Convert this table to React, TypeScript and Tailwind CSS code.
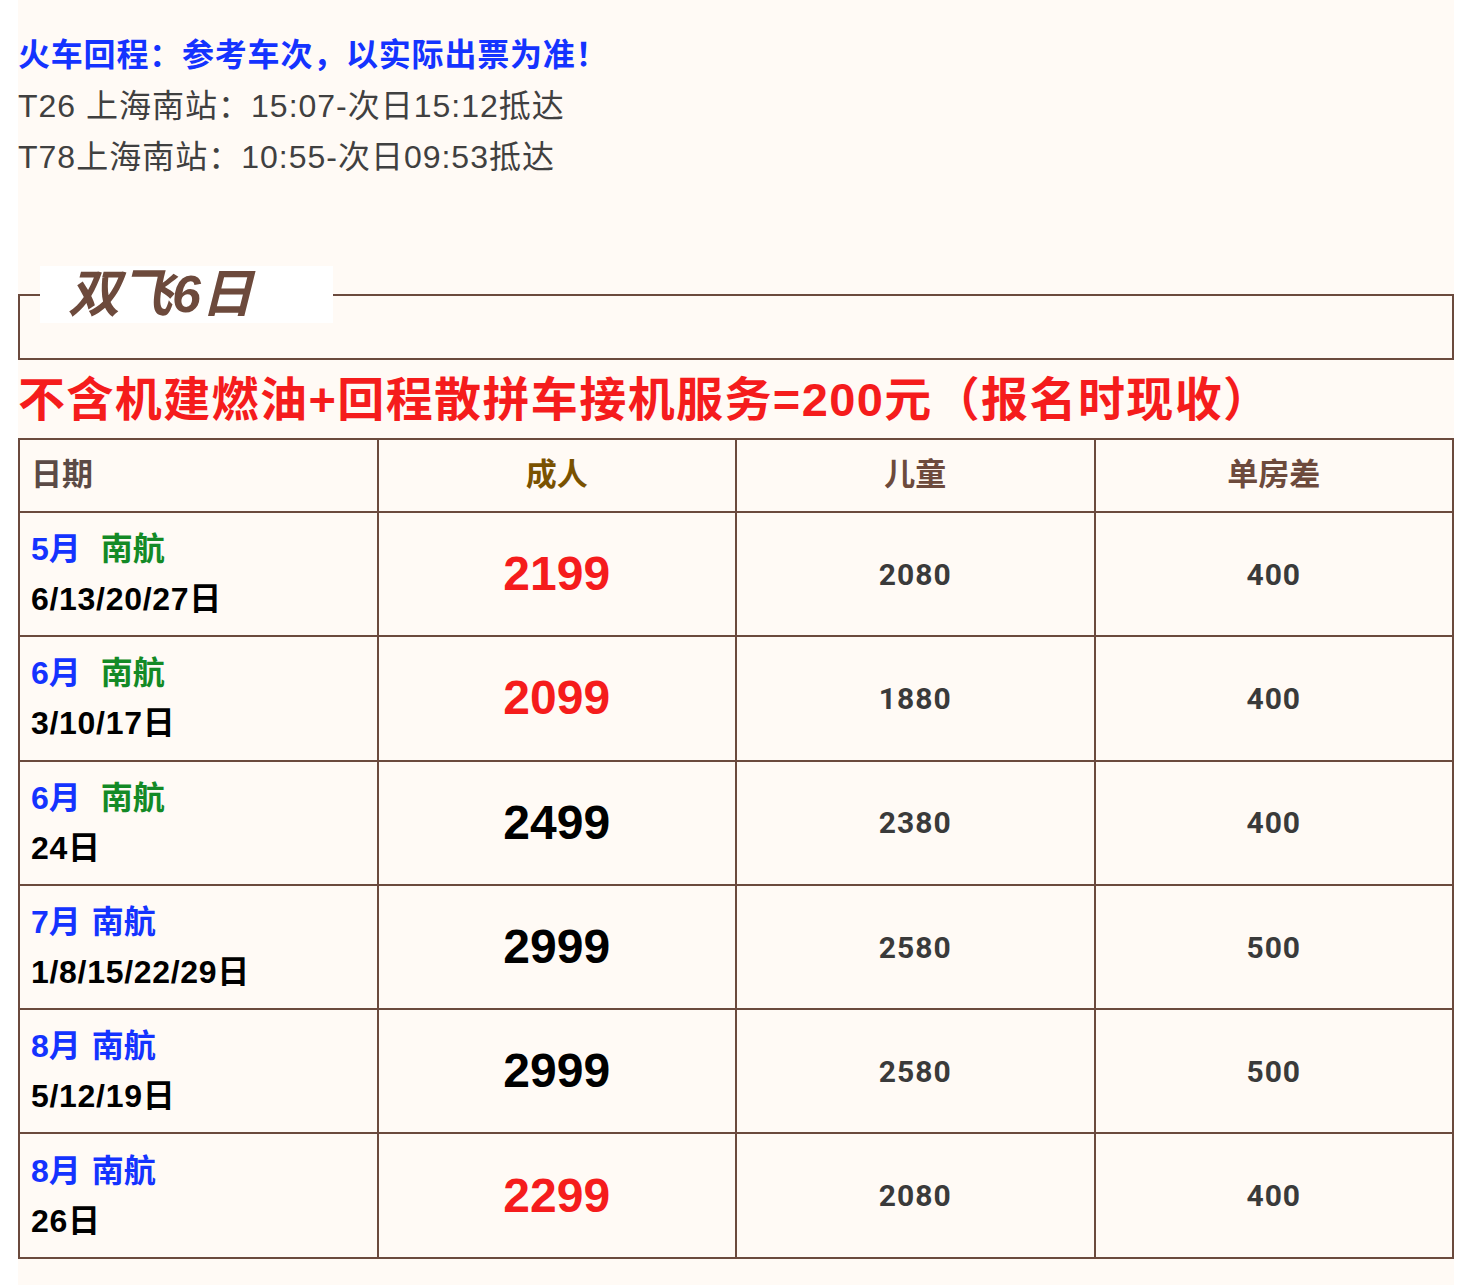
const FONT = "font-['Liberation_Sans','Noto_Sans_CJK_SC',sans-serif]";

type Row = {
  month: string;
  airline: string;
  green: boolean;
  dates: string;
  adult: string;
  red: boolean;
  child: string;
  single: string;
};

const ROWS: Row[] = [
  { month: "5月", airline: "南航", green: true, dates: "6/13/20/27日", adult: "2199", red: true, child: "2080", single: "400" },
  { month: "6月", airline: "南航", green: true, dates: "3/10/17日", adult: "2099", red: true, child: "1880", single: "400" },
  { month: "6月", airline: "南航", green: true, dates: "24日", adult: "2499", red: false, child: "2380", single: "400" },
  { month: "7月", airline: "南航", green: false, dates: "1/8/15/22/29日", adult: "2999", red: false, child: "2580", single: "500" },
  { month: "8月", airline: "南航", green: false, dates: "5/12/19日", adult: "2999", red: false, child: "2580", single: "500" },
  { month: "8月", airline: "南航", green: false, dates: "26日", adult: "2299", red: true, child: "2080", single: "400" },
];

export default function App() {
  return (
    <div className={`min-h-[1285px] bg-white ${FONT}`}>
      <div className="ml-[18px] w-[1436px] min-h-[1285px] bg-[#fffaf5] pt-[30px]">
        {/* train info */}
        <div className="text-[32px] leading-[51px]">
          <p className="font-bold tracking-[0.8px] text-[#1433ff]">火车回程：参考车次，以实际出票为准！</p>
          <p className="tracking-[1px] text-[#404040]">T26 上海南站：15:07-次日15:12抵达</p>
          <p className="tracking-[1px] text-[#404040]">T78上海南站：10:55-次日09:53抵达</p>
        </div>

        <fieldset className="mt-[83px] border-2 border-[#6b4a3d]">
          <legend className="ml-[20px] h-[57px] w-[293px] bg-white pl-[28px]">
            <span className="text-[52px] font-bold italic leading-[57px] text-[#6d4a3c]">双飞6日</span>
          </legend>
          <div className="h-[35px]" />
        </fieldset>

        <div className="flex h-[78px] items-center">
          <h2 className="text-[47px] font-bold leading-none tracking-[1.4px] text-[#f51c1c]">
            不含机建燃油+回程散拼车接机服务=200元（报名时现收）
          </h2>
        </div>

        <table className="w-full table-fixed border-collapse border-2 border-[#6b4a3d]">
          <thead>
            <tr className="h-[73px]">
              <th className="border-2 border-[#6b4a3d] px-[11px] text-left text-[31px] font-bold text-[#5b4a45]">日期</th>
              <th className="border-2 border-[#6b4a3d] text-center text-[31px] font-bold text-[#7a5200]">成人</th>
              <th className="border-2 border-[#6b4a3d] text-center text-[31px] font-bold text-[#6d4a3c]">儿童</th>
              <th className="border-2 border-[#6b4a3d] text-center text-[31px] font-bold text-[#6d4a3c]">单房差</th>
            </tr>
          </thead>
          <tbody>
            {ROWS.map((r, i) => (
              <tr key={i} className="h-[124.3px]">
                <td className="border-2 border-[#6b4a3d] px-[11px] align-middle text-[32px] font-bold leading-[50px]">
                  <div>
                    <span className="text-[#1433ff]">{r.month}</span>
                    <span className={r.green ? "ml-[20px] text-[#138a26]" : "ml-[11px] text-[#1433ff]"}>{r.airline}</span>
                  </div>
                  <div className="tracking-[0.7px] text-black">{r.dates}</div>
                </td>
                <td className={`border-2 border-[#6b4a3d] text-center text-[48px] font-bold ${r.red ? "text-[#f51c1c]" : "text-black"}`}>
                  {r.adult}
                </td>
                <td className="border-2 border-[#6b4a3d] text-center font-['Roboto',sans-serif] text-[30px] font-bold tracking-[1px] text-[#3a3a3a]">
                  {r.child}
                </td>
                <td className="border-2 border-[#6b4a3d] text-center font-['Roboto',sans-serif] text-[30px] font-bold tracking-[1px] text-[#3a3a3a]">
                  {r.single}
                </td>
              </tr>
            ))}
          </tbody>
        </table>
      </div>
    </div>
  );
}
